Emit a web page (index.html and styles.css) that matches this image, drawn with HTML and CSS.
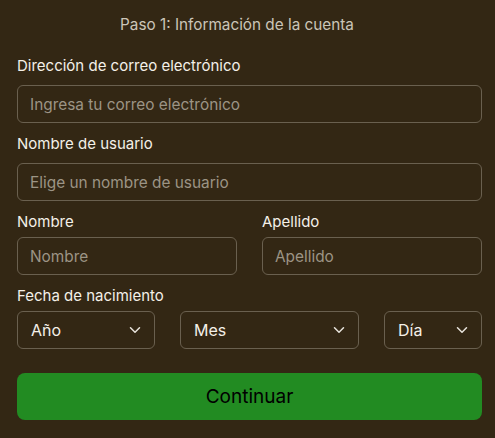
FILE: index.html
```html
<!DOCTYPE html>
<html lang="es">
<head>
<meta charset="utf-8">
<link rel="stylesheet" href="styles.css">
</head>
<body>
<form class="card">
  <h2 class="title">Paso 1: Información de la cuenta</h2>
  <div class="field">
    <label class="label">Dirección de correo electrónico</label>
    <div class="input placeholder">Ingresa tu correo electrónico</div>
  </div>
  <div class="field">
    <label class="label">Nombre de usuario</label>
    <div class="input placeholder">Elige un nombre de usuario</div>
  </div>
  <div class="row2">
    <div class="field tight">
      <label class="label">Nombre</label>
      <div class="input placeholder">Nombre</div>
    </div>
    <div class="field tight">
      <label class="label">Apellido</label>
      <div class="input placeholder">Apellido</div>
    </div>
  </div>
  <div class="field tight">
    <label class="label">Fecha de nacimiento</label>
    <div class="row3">
      <div class="input select"><span>Año</span><svg class="chev" viewBox="0 0 12 8" width="12" height="8"><path d="M1.5 1.8 L6 6.2 L10.5 1.8" fill="none" stroke="currentColor" stroke-width="1.5" stroke-linecap="round" stroke-linejoin="round"/></svg></div>
      <div class="input select"><span>Mes</span><svg class="chev" viewBox="0 0 12 8" width="12" height="8"><path d="M1.5 1.8 L6 6.2 L10.5 1.8" fill="none" stroke="currentColor" stroke-width="1.5" stroke-linecap="round" stroke-linejoin="round"/></svg></div>
      <div class="input select"><span>Día</span><svg class="chev" viewBox="0 0 12 8" width="12" height="8"><path d="M1.5 1.8 L6 6.2 L10.5 1.8" fill="none" stroke="currentColor" stroke-width="1.5" stroke-linecap="round" stroke-linejoin="round"/></svg></div>
    </div>
  </div>
  <button type="button" class="btn">Continuar</button>
</form>
</body>
</html>
```
FILE: styles.css
```css
html, body {
  margin: 0;
  padding: 0;
  background: #332714;
}
body {
  font-family: Inter, "Liberation Sans", sans-serif;
  color: #f2eee6;
  width: 495px;
  height: 438px;
  overflow: hidden;
}
.card {
  padding: 14px 13px 0 17px;
  display: flex;
  flex-direction: column;
}
.title {
  margin: 0 0 20px 0;
  padding-right: 25px;
  font-size: 15.3px;
  font-weight: 400;
  text-align: center;
  color: #cbc5b8;
  line-height: 22px;
}
.field {
  display: flex;
  flex-direction: column;
  margin-bottom: 11px;
}
.label {
  font-size: 15px;
  line-height: 20px;
  margin-bottom: 9px;
  color: #f4f0e8;
}
.tight .label {
  margin-bottom: 5px;
}
.input {
  box-sizing: border-box;
  height: 38px;
  border: 1px solid #6a604f;
  border-radius: 6px;
  padding: 0 12px;
  display: flex;
  align-items: center;
  font-size: 15.4px;
}
.placeholder {
  color: #9c9485;
}
.row2 {
  display: grid;
  grid-template-columns: 1fr 1fr;
  column-gap: 25px;
}
.row3 {
  display: grid;
  grid-template-columns: 138px 179px 1fr;
  column-gap: 25px;
}
.select {
  justify-content: space-between;
  color: #f4f0e8;
  font-size: 16px;
  padding: 0 13px 0 13px;
}
.chev {
  color: #e8e4dc;
}
.btn {
  margin-top: 13px;
  height: 47px;
  border: none;
  border-radius: 8px;
  background: #228b22;
  color: #000;
  font-family: Inter, "Liberation Sans", sans-serif;
  font-size: 19px;
  padding: 0;
}
```
